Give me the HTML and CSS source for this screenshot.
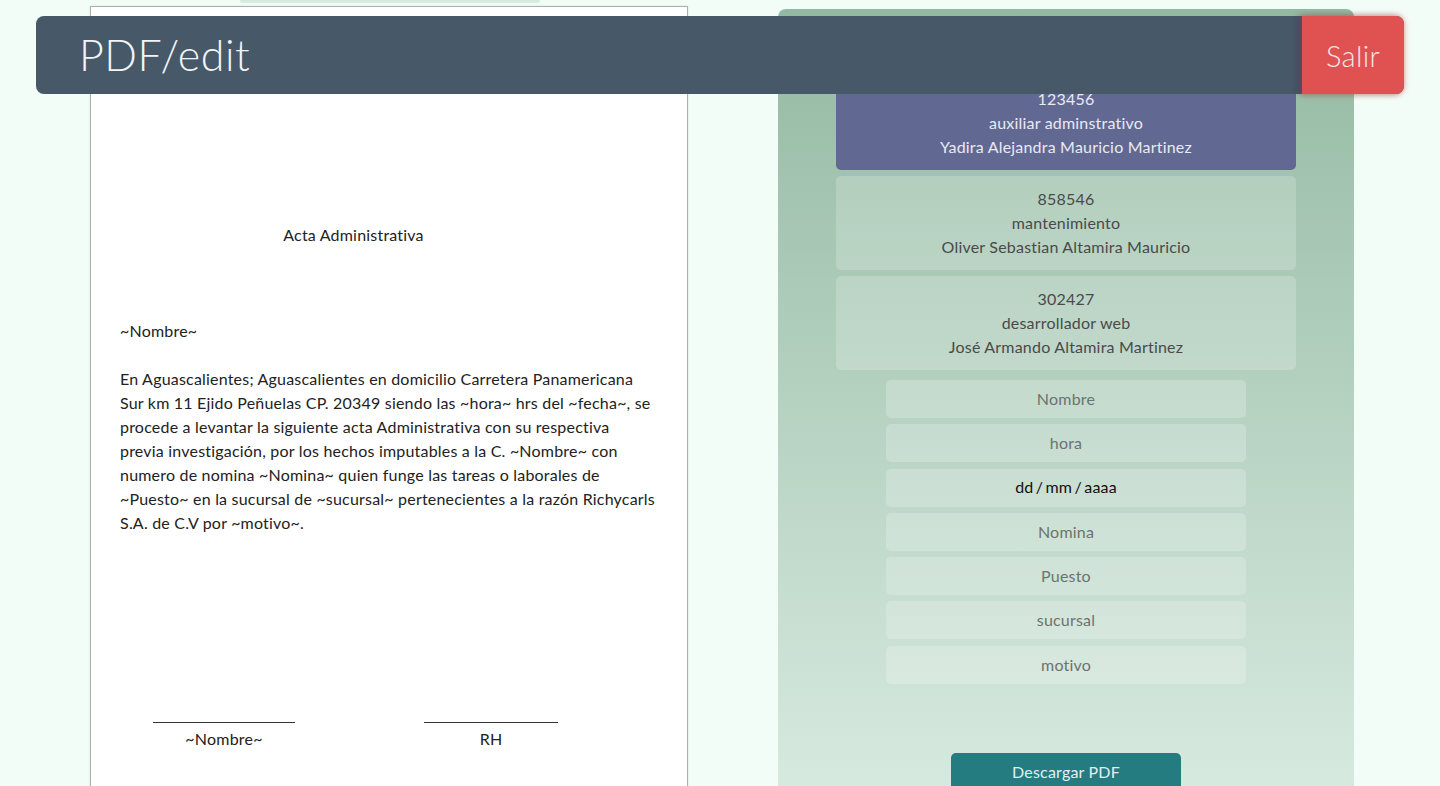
FILE: index.html
```html
<!DOCTYPE html>
<html lang="es">
<head>
<meta charset="utf-8">
<title>PDF/edit</title>
<link rel="stylesheet" href="styles.css">
</head>
<body>
<header class="topbar">
  <h1 class="topbar-title">PDF/edit</h1>
  <button class="logout">Salir</button>
</header>
<main class="layout">
  <section class="doc-col">
    <div class="prev-tab"></div>
    <article class="sheet">
      <p class="sheet-title">Acta Administrativa</p>
      <p class="sheet-name">~Nombre~</p>
      <p class="sheet-body">En Aguascalientes; Aguascalientes en domicilio Carretera Panamericana<br>Sur km 11 Ejido Peñuelas CP. 20349 siendo las ~hora~ hrs del ~fecha~, se<br>procede a levantar la siguiente acta Administrativa con su respectiva<br>previa investigación, por los hechos imputables a la C. ~Nombre~ con<br>numero de nomina ~Nomina~ quien funge las tareas o laborales de<br>~Puesto~ en la sucursal de ~sucursal~ pertenecientes a la razón Richycarls<br>S.A. de C.V por ~motivo~.</p>
      <div class="signs">
        <div class="sign sign-left"><div class="sign-line"></div><span>~Nombre~</span></div>
        <div class="sign sign-right"><div class="sign-line"></div><span>RH</span></div>
      </div>
    </article>
  </section>
  <aside class="panel">
    <div class="card card-active"><span>123456</span><span>auxiliar adminstrativo</span><span>Yadira Alejandra Mauricio Martinez</span></div>
    <div class="card"><span>858546</span><span>mantenimiento</span><span>Oliver Sebastian Altamira Mauricio</span></div>
    <div class="card"><span>302427</span><span>desarrollador web</span><span>José Armando Altamira Martinez</span></div>
    <form class="fields">
      <input class="field" type="text" placeholder="Nombre">
      <input class="field" type="text" placeholder="hora">
      <div class="field field-date">dd / mm / aaaa</div>
      <input class="field" type="text" placeholder="Nomina">
      <input class="field" type="text" placeholder="Puesto">
      <input class="field" type="text" placeholder="sucursal">
      <input class="field" type="text" placeholder="motivo">
    </form>
    <button class="download">Descargar PDF</button>
  </aside>
</main>
</body>
</html>
```
FILE: styles.css
```css
* { box-sizing: border-box; }
html, body { margin: 0; padding: 0; }
body {
  background: #f3fdf8;
  font-family: "Lato", "Open Sans", sans-serif;
  font-size: 16px;
  line-height: 24px;
  letter-spacing: 0.2px;
  overflow: hidden;
  height: 786px;
}
.topbar {
  position: fixed;
  top: 16px;
  left: 36px;
  width: 1368px;
  height: 78px;
  background: #475869;
  border-radius: 8px;
  display: flex;
  align-items: center;
  justify-content: space-between;
  z-index: 10;
}
.topbar-title {
  margin: 0 0 0 43px;
  font-weight: 300;
  font-size: 43px;
  line-height: 48px;
  letter-spacing: 0.5px;
  color: #f2f4f6;
}
.logout {
  align-self: stretch;
  width: 102px;
  border: 0;
  border-radius: 0 8px 8px 0;
  background: #e05252;
  color: #f6e6e6;
  font-family: inherit;
  font-weight: 300;
  font-size: 29px;
  letter-spacing: 0.3px;
  box-shadow: 0 0 6px rgba(224, 82, 82, 0.55), -3px 0 6px rgba(20, 30, 40, 0.35);
  padding: 0;
}
.layout {
  display: flex;
  align-items: flex-start;
  padding-left: 90px;
  gap: 90px;
}
.doc-col { width: 598px; }
.prev-tab {
  margin-left: 150px;
  width: 300px;
  height: 2px;
  background: #d4ecdc;
  border-radius: 0 0 4px 4px;
  box-shadow: 0 1px 1px rgba(0,0,0,0.08);
}
.sheet {
  margin-top: 4px;
  background: #fff;
  border: 1px solid #a9b3ae;
  height: 900px;
  padding: 216px 20px 0 29px;
  color: #222;
  box-shadow: 0 0 2px rgba(0,0,0,0.1);
}
.sheet p { margin: 0; }
.sheet-title { text-align: center; padding-right: 80px; margin-bottom: 72px !important; }
.sheet-name { margin-bottom: 24px !important; }
.sheet-body { white-space: nowrap; }
.signs {
  display: flex;
  margin-top: 187px;
  padding-left: 33px;
}
.sign {
  display: flex;
  flex-direction: column;
  align-items: center;
  line-height: 24px;
}
.sign-left { width: 142px; }
.sign-right { width: 134px; margin-left: 129px; }
.sign-line {
  width: 100%;
  border-top: 1px solid #333;
  margin-bottom: 4px;
}
.panel {
  margin-top: 9px;
  width: 576px;
  height: 840px;
  border-radius: 8px;
  background: linear-gradient(#93b9a2 0%, #d5e8dd 90%, #dcede3 100%);
  display: flex;
  flex-direction: column;
  align-items: center;
  padding-top: 67px;
}
.card {
  width: 460px;
  height: 94px;
  padding: 11px 0;
  margin-bottom: 6px;
  border-radius: 5px;
  background: rgba(255, 255, 255, 0.2);
  color: #4a4a4a;
  display: flex;
  flex-direction: column;
  align-items: center;
}
.card-active {
  background: #616892;
  color: #e9eaf2;
}
.fields {
  margin-top: 4px;
  display: flex;
  flex-direction: column;
  gap: 6.3px;
  align-items: center;
}
.field {
  width: 360px;
  height: 38px;
  border: 0;
  border-radius: 5px;
  background: rgba(255, 255, 255, 0.22);
  font-family: inherit;
  font-size: 16px;
  letter-spacing: 0.2px;
  text-align: center;
  color: #222;
  outline: none;
  display: flex;
  align-items: center;
  justify-content: center;
  padding-bottom: 2px;
}
.field::placeholder { color: #6c736f; }
.field-date { color: #111; word-spacing: -2px; }
.download {
  margin-top: 69px;
  width: 230px;
  height: 38px;
  border: 0;
  border-radius: 5px;
  background: #247b80;
  color: #e4eef0;
  font-family: inherit;
  font-size: 16px;
  letter-spacing: 0.2px;
  padding: 0;
}
```
